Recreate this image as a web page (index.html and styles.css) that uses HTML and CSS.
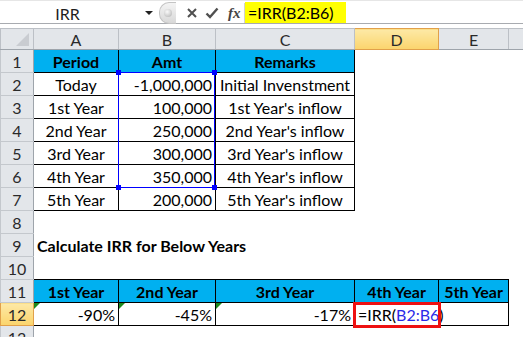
FILE: index.html
```html
<!DOCTYPE html>
<html lang="en">
<head>
    <meta charset="UTF-8">
    <title>IRR</title>
    <link rel="stylesheet" href="styles.css">
</head>
<body>
    <div class="formula-bar">
        <div class="name-box">
            <span class="name">IRR</span>
            <span class="drop"></span>
        </div>
        <div class="splitter"><span class="knob"></span></div>
        <div class="bar-icons">
            <svg width="12" height="12" viewBox="0 0 12 12"><path d="M2 2 L10 10 M10 2 L2 10" stroke="#505050" stroke-width="2"/></svg>
            <svg width="14" height="12" viewBox="0 0 14 12"><path d="M1.5 6.5 L5 10 L12.5 1.5" stroke="#505050" stroke-width="2.4" fill="none"/></svg>
            <span class="fx">fx</span>
        </div>
        <div class="formula"><span class="formula-text">=IRR(B2:B6)</span></div>
    </div>

    <div class="sheet">
        <table class="grid">
            <colgroup>
                <col class="c-rh"><col class="c-a"><col class="c-b"><col class="c-c"><col class="c-d"><col class="c-e"><col class="c-f">
            </colgroup>
            <tr class="heads">
                <th class="corner"><span class="tri"></span></th>
                <th>A</th><th>B</th><th>C</th><th class="on">D</th><th>E</th><th></th>
            </tr>
            <tr>
                <th class="rh">1</th>
                <td class="box hd">Period</td><td class="box hd">Amt</td><td class="box hd">Remarks</td><td></td><td></td><td></td>
            </tr>
            <tr>
                <th class="rh">2</th>
                <td class="box mid">Today</td><td class="box num">-1,000,000</td><td class="box mid">Initial Invenstment</td><td></td><td></td><td></td>
            </tr>
            <tr>
                <th class="rh">3</th>
                <td class="box mid">1st Year</td><td class="box num">100,000</td><td class="box mid">1st Year's inflow</td><td></td><td></td><td></td>
            </tr>
            <tr>
                <th class="rh">4</th>
                <td class="box mid">2nd Year</td><td class="box num">250,000</td><td class="box mid">2nd Year's inflow</td><td></td><td></td><td></td>
            </tr>
            <tr>
                <th class="rh">5</th>
                <td class="box mid">3rd Year</td><td class="box num">300,000</td><td class="box mid">3rd Year's inflow</td><td></td><td></td><td></td>
            </tr>
            <tr>
                <th class="rh">6</th>
                <td class="box mid">4th Year</td><td class="box num">350,000</td><td class="box mid">4th Year's inflow</td><td></td><td></td><td></td>
            </tr>
            <tr>
                <th class="rh">7</th>
                <td class="box mid">5th Year</td><td class="box num">200,000</td><td class="box mid">5th Year's inflow</td><td></td><td></td><td></td>
            </tr>
            <tr>
                <th class="rh">8</th>
                <td></td><td></td><td></td><td></td><td></td><td></td>
            </tr>
            <tr>
                <th class="rh">9</th>
                <td class="title" colspan="3">Calculate IRR for Below Years</td><td></td><td></td><td></td>
            </tr>
            <tr>
                <th class="rh">10</th>
                <td></td><td></td><td></td><td></td><td></td><td></td>
            </tr>
            <tr>
                <th class="rh">11</th>
                <td class="box hd">1st Year</td><td class="box hd">2nd Year</td><td class="box hd">3rd Year</td><td class="box hd">4th Year</td><td class="box hd">5th Year</td><td></td>
            </tr>
            <tr>
                <th class="rh on">12</th>
                <td class="box num flag">-90%</td><td class="box num flag">-45%</td><td class="box num flag">-17%</td>
                <td class="box edit">=IRR(<span class="ref">B2:B6</span>)</td><td class="box"></td><td></td>
            </tr>
            <tr>
                <th class="rh">13</th>
                <td></td><td></td><td></td><td></td><td></td><td></td>
            </tr>
        </table>

        <!-- range being referenced by the formula -->
        <div class="range">
            <span class="h tl"></span><span class="h tr"></span>
            <span class="h bl"></span><span class="h br"></span>
        </div>
        <!-- red annotation around D12 -->
        <div class="mark"></div>
    </div>
</body>
</html>
```

FILE: styles.css
```css
body {
    margin: 0;
    width: 523px;
    height: 337px;
    overflow: hidden;
    background: #fff;
    font-family: Lato, "Open Sans", sans-serif;
    color: #000;
}

/* formula bar */
.formula-bar {
    display: flex;
    height: 24px;
    border-bottom: 1px solid #a8abb0;
    box-sizing: border-box;
    padding-top: 2px;
    border-top: 1px solid #e6e6e6;
}
.name-box {
    width: 159px;
    display: flex;
    align-items: center;
    position: relative;
}
.name {
    flex: 1;
    text-align: center;
    font-size: 16px;
    padding-right: 10px;
    color: #1e1e1e;
}
.drop {
    width: 0;
    height: 0;
    border-left: 4px solid transparent;
    border-right: 4px solid transparent;
    border-top: 4px solid #222;
    margin-right: 6px;
}
.splitter {
    width: 16px;
    height: 20px;
    margin-top: -1px;
    border-radius: 10px 0 0 10px;
    background: linear-gradient(#f4f4f4, #d8d8d8);
    border: 1px solid #c4c4c4;
    border-right: none;
    display: flex;
    align-items: center;
    justify-content: center;
}
.knob {
    width: 8px;
    height: 8px;
    border-radius: 50%;
    background: radial-gradient(circle at 40% 35%, #fafafa, #b0b0b0);
}
.bar-icons {
    width: 68px;
    display: flex;
    align-items: center;
    gap: 7px;
    padding-left: 10px;
    box-sizing: border-box;
    background: #fff;
}
.fx {
    font-family: "Liberation Serif", serif;
    font-style: italic;
    font-weight: bold;
    font-size: 15px;
    color: #444;
    margin-left: 2px;
}
.formula {
    flex: 1;
    border-left: 1px solid #d0d0d0;
}
.formula-text {
    display: inline-block;
    width: 101px;
    height: 21px;
    margin-top: -1px;
    padding-left: 3px;
    box-sizing: border-box;
    background: #ffff00;
    font-size: 16px;
    line-height: 21px;
}

/* sheet */
.sheet {
    position: relative;
    margin-top: 4px;
}
.grid {
    border-collapse: collapse;
    table-layout: fixed;
    width: 540px;
    font-size: 16px;
}
.c-rh { width: 33px; }
.c-a { width: 85px; }
.c-b { width: 97px; }
.c-c { width: 139px; }
.c-d { width: 84px; }
.c-e { width: 70px; }
.c-f { width: 32px; }

.grid tr { height: 23px; }
.grid tr.heads { height: 21px; }
.grid td {
    padding: 0 3px;
    line-height: 21px;
    white-space: nowrap;
    overflow: visible;
}
.heads th {
    background: #e3e6ea;
    border: 1px solid #bcc0c6;
    border-bottom-color: #9ea4ab;
    font-weight: normal;
    color: #2a2a2a;
    padding: 0;
    line-height: 19px;
}
.heads th.on {
    background: linear-gradient(#fde9a6, #fbd46c);
    border-color: #e1a04a;
}
.corner {
    position: relative;
}
.tri {
    position: absolute;
    right: 4px;
    bottom: 3px;
    width: 0;
    height: 0;
    border-left: 13px solid transparent;
    border-bottom: 13px solid #c9ccd1;
}
.rh {
    background: #e3e6ea;
    border: 1px solid #c4c8cd;
    border-right-color: #9ea4ab;
    font-weight: normal;
    color: #2a2a2a;
    padding: 0;
    line-height: 21px;
}
.rh.on {
    background: linear-gradient(#fde9a6, #fbd46c);
    border-color: #e1a04a;
}

.box { border: 1px solid #000; }
.hd {
    background: #00b0f0;
    font-weight: bold;
    text-align: center;
}
.mid { text-align: center; }
.num { text-align: right; }
.title {
    font-weight: bold;
    padding-left: 2px;
}
.edit { padding-left: 3px; }
.ref { color: #2a2ae8; }
.flag { position: relative; }
.flag::before {
    content: "";
    position: absolute;
    left: 0;
    top: 0;
    border-top: 6px solid #1c8a1c;
    border-right: 6px solid transparent;
}

/* overlays */
.range {
    position: absolute;
    left: 118px;
    top: 44px;
    width: 97px;
    height: 116px;
    border: 1px solid #0000ff;
    box-sizing: border-box;
}
.range .h {
    position: absolute;
    width: 5px;
    height: 5px;
    background: #0000ff;
}
.tl { left: -3px; top: -3px; }
.tr { right: -3px; top: -3px; }
.bl { left: -3px; bottom: -3px; }
.br { right: -3px; bottom: -3px; }
.mark {
    position: absolute;
    left: 353px;
    top: 274px;
    width: 88px;
    height: 26px;
    border: 3px solid #ee1111;
    box-sizing: border-box;
}
```
